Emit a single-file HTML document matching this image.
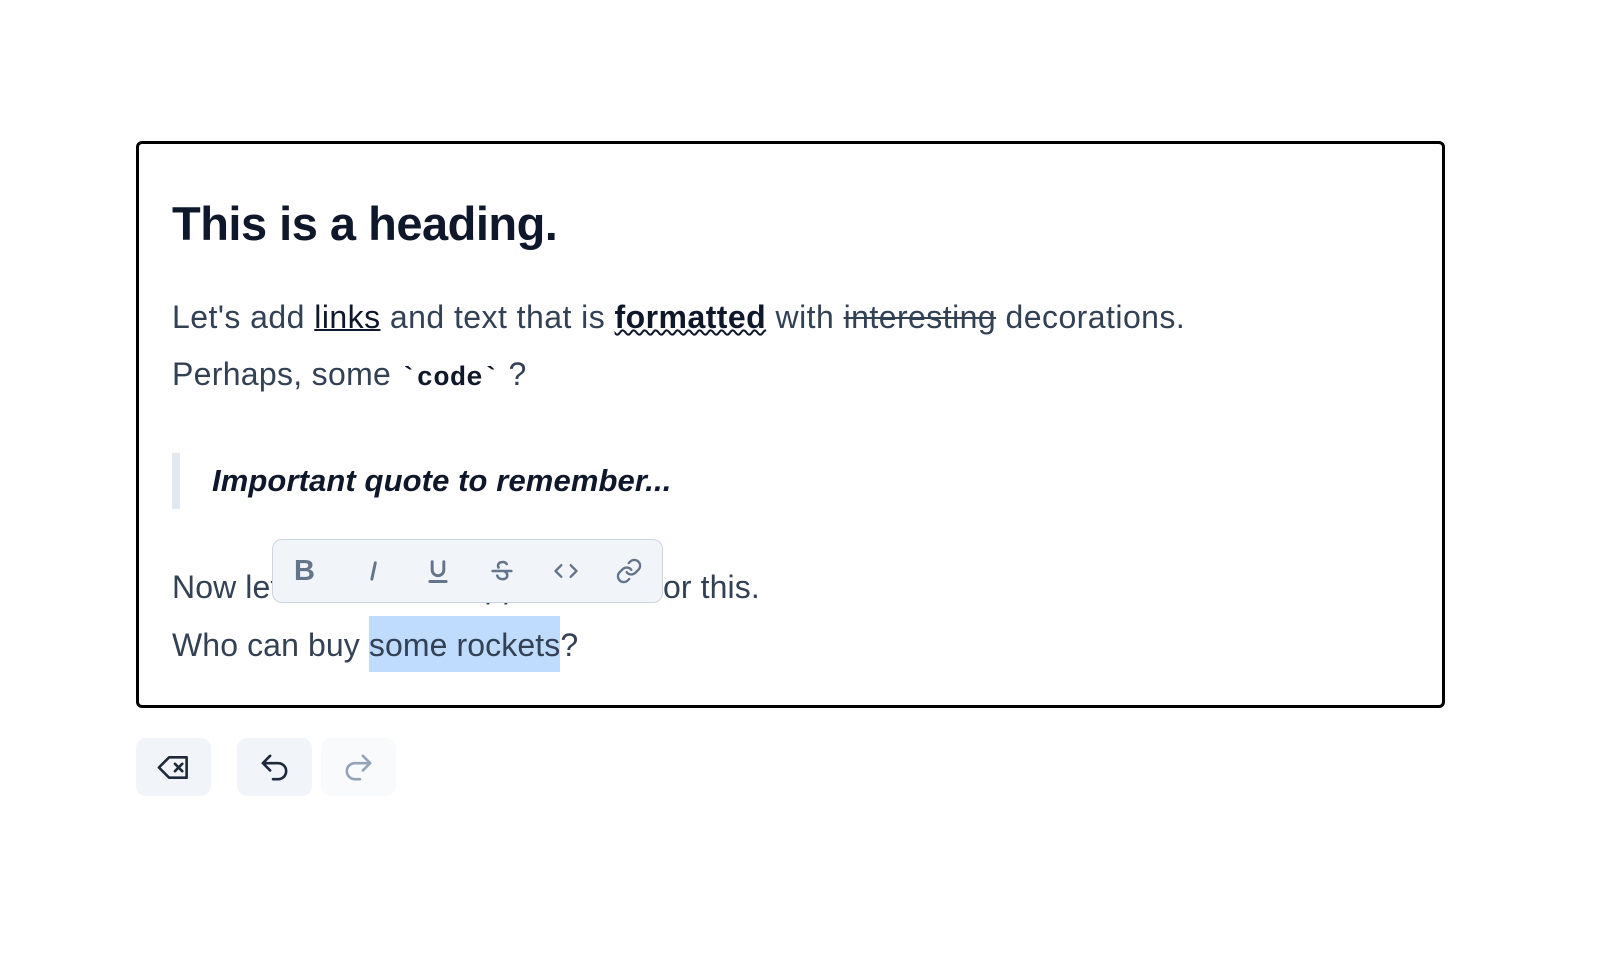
<!DOCTYPE html>
<html><head><meta charset="utf-8"><style>
body{margin:0;width:1600px;height:960px;background:#fff;font-family:"Liberation Sans",sans-serif;position:relative;overflow:hidden}
.box{position:absolute;left:136px;top:141px;width:1303px;height:561px;border:3px solid #000;border-radius:6px}
.t{position:absolute;left:172px;white-space:nowrap;color:#334155;font-size:32px;line-height:37px;letter-spacing:0.1px}
h1{position:absolute;left:172px;top:197px;margin:0;font-size:47px;line-height:54px;color:#0f172a;font-weight:bold;letter-spacing:-0.5px}
b.l{color:#0f172a;text-decoration:underline;text-decoration-thickness:2px;font-weight:normal}
.f{color:#0f172a;font-weight:bold;text-decoration:underline wavy;text-decoration-thickness:1.5px}
s{text-decoration-thickness:2px}
code{font-family:"Liberation Mono",monospace;font-weight:bold;color:#0f172a;font-size:27px}
.q{position:absolute;left:172px;top:453px;width:8px;height:56px;background:#e2e8f0}
.tb{position:absolute;left:272px;top:539px;width:389px;height:62px;background:#f1f5f9;border:1.5px solid #cbd5e1;border-radius:10px}
.ic{position:absolute;top:17px;width:28px;height:28px}
.btn{position:absolute;top:738px;width:75px;height:58px;border-radius:10px;background:#f1f5f9}
.btn svg{position:absolute;left:20px;top:12px}
</style></head><body>
<div class="box"></div>
<h1>This is a heading.</h1>
<div class="t" style="top:299px;letter-spacing:0.45px">Let's add <b class="l">links</b> and text that is <span class="f">formatted</span> with <s>interesting</s> decorations.</div>
<div class="t" style="top:356px;letter-spacing:0.3px">Perhaps, some <code>`code`</code> ?</div>
<div class="q"></div>
<div class="t" style="top:462px;left:212px;color:#0f172a;font-style:italic;font-weight:bold;font-size:31px">Important quote to remember...</div>
<div class="t" style="top:569px">Now let's see what happens</div>
<div class="t" style="top:569px;left:663px">or this.</div>
<div class="t" style="top:627px">Who can buy <span style="background:#bfdbfe;padding:11px 0 9px">some rockets</span>?</div>
<div class="tb">
<div class="ic" style="left:21px;font:bold 29px 'Liberation Sans';color:#64748b;line-height:28px">B</div>
<svg class="ic" style="left:86px" viewBox="0 0 24 24" fill="none" stroke="#64748b" stroke-width="2.5" stroke-linecap="round"><path d="M14 5l-3 14"/></svg>
<svg class="ic" style="left:151px" viewBox="0 0 24 24" fill="none" stroke="#64748b" stroke-width="2.5" stroke-linecap="round"><path d="M7 4v7a5 5 0 0010 0V4M5 21h14"/></svg>
<svg class="ic" style="left:215px" viewBox="0 0 24 24" fill="none" stroke="#64748b" stroke-width="2.2" stroke-linecap="round"><path d="M16 6c-1-1.5-3-2-5-1.5S8 7 9 9M4 12h16M8 16c.5 2 2.5 3 4.5 3s4-1 4-3-1-3-2-3.5"/></svg>
<svg class="ic" style="left:279px" viewBox="0 0 24 24" fill="none" stroke="#64748b" stroke-width="2" stroke-linecap="round" stroke-linejoin="round"><path d="M8 7l-5 5 5 5M16 7l5 5-5 5"/></svg>
<svg class="ic" style="left:342px" viewBox="0 0 24 24" fill="none" stroke="#64748b" stroke-width="2" stroke-linecap="round"><path d="M10 13a5 5 0 007.5.5l3-3a5 5 0 00-7-7l-1.7 1.7M14 11a5 5 0 00-7.5-.5l-3 3a5 5 0 007 7l1.7-1.7"/></svg>
</div>
<div class="btn" style="left:136px"><svg width="35" height="35" viewBox="0 0 24 24" fill="none" stroke="#1e293b" stroke-width="1.8" stroke-linejoin="round" stroke-linecap="round"><path d="M21 5H9l-7 7 7 7h12z M13 9.5l5 5M18 9.5l-5 5"/></svg></div>
<div class="btn" style="left:237px"><svg width="35" height="35" viewBox="0 0 24 24" fill="none" stroke="#1e293b" stroke-width="1.8" stroke-linecap="round" stroke-linejoin="round"><path d="M9 14L4 9l5-5M4 9h10.5a5.5 5.5 0 010 11H11"/></svg></div>
<div class="btn" style="left:321px;background:#f8fafc"><svg width="35" height="35" viewBox="0 0 24 24" fill="none" stroke="#94a3b8" stroke-width="1.8" stroke-linecap="round" stroke-linejoin="round"><path d="M15 14l5-5-5-5M20 9H9.5a5.5 5.5 0 000 11H13"/></svg></div>
</body></html>
